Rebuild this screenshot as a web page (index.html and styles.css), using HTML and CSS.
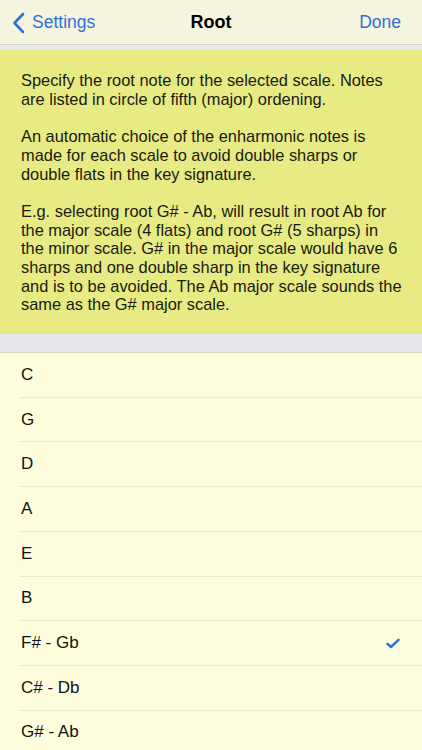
FILE: index.html
```html
<!DOCTYPE html>
<html>
<head>
<meta charset="utf-8">
<link rel="stylesheet" href="styles.css">
</head>
<body>
<header class="nav">
  <div class="nav-left">
    <svg class="chev" width="13" height="22" viewBox="0 0 13 22"><path d="M11 2 L2.5 11 L11 20" fill="none" stroke="#2f6fd9" stroke-width="2.6" stroke-linecap="round" stroke-linejoin="round"/></svg>
    <span>Settings</span>
  </div>
  <div class="nav-title">Root</div>
  <div class="nav-right">Done</div>
</header>
<div class="gap-top"></div>
<section class="info">
  <p>Specify the root note for the selected scale. Notes are listed in circle of fifth (major) ordening.</p>
  <p>An automatic choice of the enharmonic notes is made for each scale to avoid double sharps or double flats in the key signature.</p>
  <p>E.g. selecting root G# - Ab, will result in root Ab for the major scale (4 flats) and root G# (5 sharps) in the minor scale. G# in the major scale would have 6 sharps and one double sharp in the key signature and is to be avoided. The Ab major scale sounds the same as the G# major scale.</p>
</section>
<div class="gap-mid"></div>
<ul class="list">
  <li><span>C</span></li>
  <li><span>G</span></li>
  <li><span>D</span></li>
  <li><span>A</span></li>
  <li><span>E</span></li>
  <li><span>B</span></li>
  <li><span>F# - Gb</span><svg class="check" width="14" height="11" viewBox="0 0 14 11"><path d="M1.5 5.8 L5 9 L12.5 1.8" fill="none" stroke="#2f6fd9" stroke-width="2.5" stroke-linecap="round" stroke-linejoin="round"/></svg></li>
  <li><span>C# - Db</span></li>
  <li><span>G# - Ab</span></li>
</ul>
</body>
</html>
```
FILE: styles.css
```css
* { box-sizing: border-box; }
html, body { margin: 0; padding: 0; }
body {
  width: 422px;
  height: 750px;
  overflow: hidden;
  font-family: "Liberation Sans", Arial, sans-serif;
  background: #fefedf;
  color: #111;
}
.nav {
  height: 45px;
  background: #f5f4dc;
  border-bottom: 1px solid #d4d3c6;
  display: grid;
  grid-template-columns: 1fr auto 1fr;
  align-items: center;
}
.nav-left {
  display: flex;
  align-items: center;
  gap: 7px;
  padding-left: 12px;
  color: #2f6fd9;
  font-size: 17.5px;
}
.chev { display: block; margin-top: 1px; }
.nav-title {
  font-weight: bold;
  font-size: 18px;
  color: #000;
}
.nav-right {
  justify-self: end;
  padding-right: 21px;
  color: #2f6fd9;
  font-size: 17.5px;
}
.gap-top {
  height: 5px;
  background: #e9e8ec;
}
.info {
  background: #e8eb84;
  padding: 21px 20px 19px 21px;
  font-size: 16.4px;
  line-height: 18.7px;
  color: #1a1a10;
}
.info p { margin: 0 0 18.7px 0; }
.info p:last-child { margin-bottom: 0; }
.gap-mid {
  height: 20px;
  background: #e9e8ec;
  border-top: 1px solid #d8d7c4;
  border-bottom: 1px solid #dcdbc8;
}
.list {
  list-style: none;
  margin: 0;
  padding: 0;
  background: #fefedf;
}
.list li {
  height: 44.7px;
  margin-left: 20px;
  padding-right: 22px;
  border-bottom: 1px solid #ebe9cf;
  display: flex;
  align-items: center;
  justify-content: space-between;
  font-size: 17px;
  color: #111;
}
.list li span { padding-left: 1px; }
.check { display: block; }
```
